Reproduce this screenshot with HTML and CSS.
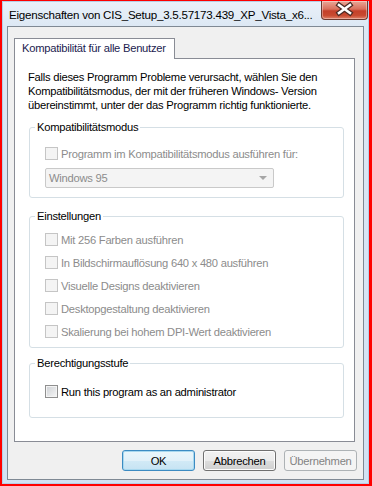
FILE: index.html
```html
<!doctype html>
<html>
<head>
<meta charset="utf-8">
<title>Eigenschaften</title>
<link rel="stylesheet" href="styles.css">
</head>
<body>
<div class="window">
  <div class="titlebar">
    <span class="title">Eigenschaften von CIS_Setup_3.5.57173.439_XP_Vista_x6...</span>
    <span class="close">
      <svg width="47" height="19" viewBox="0 0 47 19">
        <path d="M18 5 L29 13 M29 5 L18 13" stroke="#4b2a24" stroke-width="5" stroke-linecap="square" fill="none"/>
        <path d="M18 5 L29 13 M29 5 L18 13" stroke="#ffffff" stroke-width="2.6" stroke-linecap="square" fill="none"/>
      </svg>
    </span>
  </div>

  <div class="dialog">
    <div class="tabs">
      <span class="tab">Kompatibilität für alle Benutzer</span>
    </div>

    <div class="panel">
      <p class="intro">Falls dieses Programm Probleme verursacht, wählen Sie den<br>Kompatibilitätsmodus, der mit der früheren Windows- Version<br>übereinstimmt, unter der das Programm richtig funktionierte.</p>

      <fieldset class="group g-compat">
        <legend>Kompatibilitätsmodus</legend>
        <div class="group-body">
          <label class="row off"><input type="checkbox" disabled><span>Programm im Kompatibilitätsmodus ausführen für:</span></label>
          <div class="combo"><span>Windows 95</span><i class="arrow"></i></div>
        </div>
      </fieldset>

      <fieldset class="group g-settings">
        <legend>Einstellungen</legend>
        <div class="group-body">
          <label class="row tall off"><input type="checkbox" disabled><span>Mit 256 Farben ausführen</span></label>
          <label class="row tall off"><input type="checkbox" disabled><span>In Bildschirmauflösung 640 x 480 ausführen</span></label>
          <label class="row tall off"><input type="checkbox" disabled><span>Visuelle Designs deaktivieren</span></label>
          <label class="row tall off"><input type="checkbox" disabled><span>Desktopgestaltung deaktivieren</span></label>
          <label class="row tall off"><input type="checkbox" disabled><span>Skalierung bei hohem DPI-Wert deaktivieren</span></label>
        </div>
      </fieldset>

      <fieldset class="group g-level">
        <legend>Berechtigungsstufe</legend>
        <div class="group-body">
          <label class="row"><input type="checkbox"><span>Run this program as an administrator</span></label>
        </div>
      </fieldset>
    </div>

    <div class="buttons">
      <button class="btn default">OK</button>
      <button class="btn">Abbrechen</button>
      <button class="btn" disabled>Übernehmen</button>
    </div>
  </div>
</div>
</body>
</html>
```

FILE: styles.css
```css
html, body { margin: 0; padding: 0; }
body {
    background: #ff0000;
    font-family: "Liberation Sans", "Noto Sans", sans-serif;
    font-size: 11.2px;
    letter-spacing: -0.25px;
    color: #000;
}

/* fensterrahmen */
.window {
    margin: 1px 3px 2px 2px;
    height: 483px;
    box-sizing: border-box;
    padding: 0 5px 5px 5px;
    background: linear-gradient(#eaf1f9 0px, #dde8f4 25px, #d2e2f3 100%);
    box-shadow: inset 0 0 0 1px #b7cde6;
}
.titlebar { display: flex; height: 25px; margin-right: -4px; }
.title {
    flex: 1; min-width: 0;
    padding: 6px 0 0 2px;
    font-size: 11.6px;
    line-height: 15px;
    white-space: nowrap; overflow: hidden;
}
.close {
    flex: none;
    width: 47px; height: 19px;
    box-sizing: border-box;
    border: 1px solid #6b3a30;
    border-top: 0;
    border-radius: 0 0 4px 4px;
    background: linear-gradient(#e8a898 0%, #d9705c 45%, #c4402a 55%, #c84a30 80%, #e0826a 100%);
    box-shadow: inset 0 0 0 1px rgba(255,255,255,0.35);
}
.close svg { display: block; margin: -1px 0 0 -1px; }

/* dialog */
.dialog {
    border: 1px solid #7f8994;
    background: #f0f0f0;
    padding: 11px 8px 8px 6px;
}
.tabs { display: flex; }
.tab {
    position: relative; z-index: 1;
    background: #fff;
    border: 1px solid #898c95;
    border-bottom: 0;
    height: 19px;
    margin-bottom: -1px;
    padding: 0 8px 1px 7px;
    line-height: 18px;
    color: #1c1c50;
}
.panel {
    background: #fff;
    border: 1px solid #898c95;
    padding: 11px 10px 23px 13px;
}
.intro { margin: 0; line-height: 14px; white-space: nowrap; }

/* gruppen */
.group {
    margin: 0 0 0 1px;
    padding: 0;
    border: 1px solid #d5dfe5;
    border-radius: 3px;
    min-inline-size: 0;
}
.group legend { margin-left: 5px; padding: 0 2px; line-height: 15px; }
.g-compat { margin-top: 8px; }
.g-compat .group-body { padding: 10px 0 9px 15px; }
.g-settings { margin-top: 11px; }
.g-settings .group-body { padding: 4px 0 4px 15px; }
.g-level { margin-top: 8px; }
.g-level .group-body { padding: 12px 0 17px 15px; }

.row { display: flex; align-items: center; gap: 3px; height: 17px; white-space: nowrap; }
.row.tall { height: 23px; }
.row.off { color: #8c8c8c; }
.row input {
    -webkit-appearance: none; appearance: none;
    flex: none;
    margin: 0; width: 13px; height: 13px;
    border: 1px solid #8f8f8f;
    box-sizing: border-box;
    background: linear-gradient(135deg, #cdd0d4, #f7f7f7);
    box-shadow: inset 0 0 0 1px #f4f4f4;
}
.row input:disabled {
    border-color: #c5c5c5;
    background: #f4f4f4;
    box-shadow: none;
}

.combo {
    margin-top: 6px;
    width: 229px; height: 20px;
    box-sizing: border-box;
    border: 1px solid #c9c9c9;
    border-radius: 2px;
    background: #f4f4f4;
    color: #8c8c8c;
    display: flex; align-items: center;
    padding: 0 6px 0 3px;
}
.combo .arrow {
    margin-left: auto;
    width: 0; height: 0;
    border-left: 4px solid transparent;
    border-right: 4px solid transparent;
    border-top: 4px solid #a6a6a6;
}

/* buttons */
.buttons { display: flex; justify-content: flex-end; gap: 8px; margin: 8px -2px 0 0; }
.btn {
    width: 73px; height: 21px;
    padding: 0;
    font: inherit;
    letter-spacing: inherit;
    color: #000;
    border: 1px solid #707070;
    border-radius: 3px;
    background: linear-gradient(#f2f2f2 0%, #ebebeb 50%, #dddddd 51%, #cfcfcf 100%);
    box-shadow: inset 0 0 0 1px #fcfcfc;
}
.btn.default {
    border-color: #3c8bc2;
    background: linear-gradient(#eaf6fb 0%, #e2f1f9 50%, #d2eaf6 51%, #c6e3f3 100%);
    box-shadow: inset 0 0 0 1px #a8d8ef;
}
.btn:disabled {
    border-color: #adb2b5;
    background: #f4f4f4;
    color: #838383;
    box-shadow: none;
}
```
